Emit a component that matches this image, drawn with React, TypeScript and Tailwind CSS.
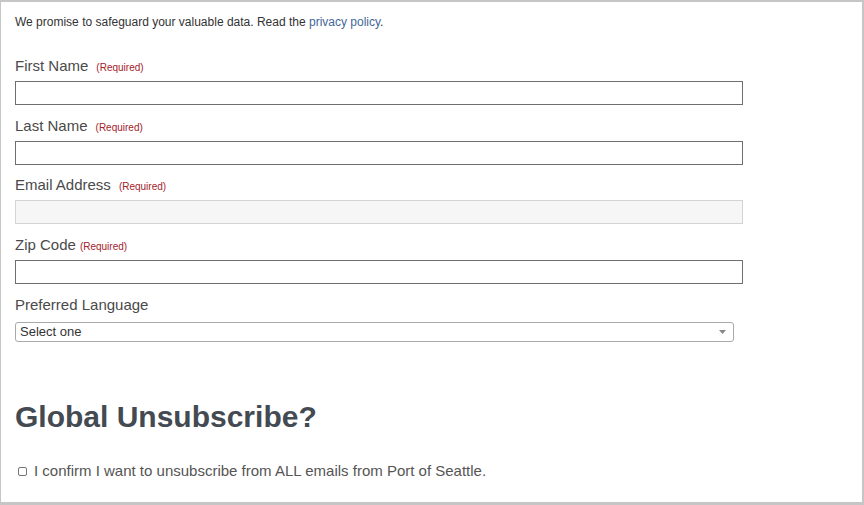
import React from "react";

const font = { fontFamily: '"Liberation Sans", Arial, sans-serif' };

function Field({
  label,
  required,
  tight,
  disabled,
  short,
}: {
  label: string;
  required?: boolean;
  tight?: boolean;
  disabled?: boolean;
  short?: boolean;
}) {
  return (
    <div className={short ? "mb-[11px]" : "mb-[12px]"}>
      <div className="mb-[6px] h-[18px] text-[15px] leading-[18px] text-[#4a4a4a]">
        <span>{label}</span>
        {required && (
          <span className={`${tight ? "ml-[4px]" : "ml-[8px]"} text-[10px] leading-[10px] text-[#a3222b]`}>
            (Required)
          </span>
        )}
      </div>
      {disabled ? (
        <div className="h-[24px] w-[728px] border border-[#d4d4d4] bg-[#f6f6f6]" />
      ) : (
        <div className="h-[24px] w-[728px] border border-[#6f6f6f] bg-white" />
      )}
    </div>
  );
}

export default function App() {
  return (
    <div
      style={font}
      className="h-[505px] w-[864px] overflow-hidden border-t-2 border-r-2 border-b-[3px] border-l border-[#c6c6c6] bg-white pl-[14px] pt-[12px]"
    >
      <p className="mb-[27px] text-[12px] leading-4 text-[#333333]">
        We promise to safeguard your valuable data. Read the{" "}
        <a className="text-[#44689a]">privacy policy</a>.
      </p>
      <Field label="First Name" required />
      <Field label="Last Name" required short />
      <Field label="Email Address" required disabled />
      <Field label="Zip Code" required tight />
      <div className="text-[15px] leading-[18px] text-[#4a4a4a]">Preferred Language</div>
      <div className="mt-[8px] flex h-[20px] w-[719px] items-center justify-between rounded-[3px] border border-[#a9a9a9] bg-white pl-[4px] pr-[7px]">
        <span className="text-[13px] leading-[16px] text-[#333333]">Select one</span>
        <svg width="7" height="4" viewBox="0 0 7 4">
          <path d="M0 0 L7 0 L3.5 4 Z" fill="#888888" />
        </svg>
      </div>
      <h2 className="mt-[57px] text-[30px] font-bold leading-[36px] text-[#434a52]">
        Global Unsubscribe?
      </h2>
      <label className="mt-[27px] flex items-center text-[15px] leading-[18px] text-[#555555]">
        <span className="ml-[3px] mr-[7px] inline-block h-[9px] w-[9px] rounded-[2px] border border-[#767676] bg-white" />
        I confirm I want to unsubscribe from ALL emails from Port of Seattle.
      </label>
    </div>
  );
}
